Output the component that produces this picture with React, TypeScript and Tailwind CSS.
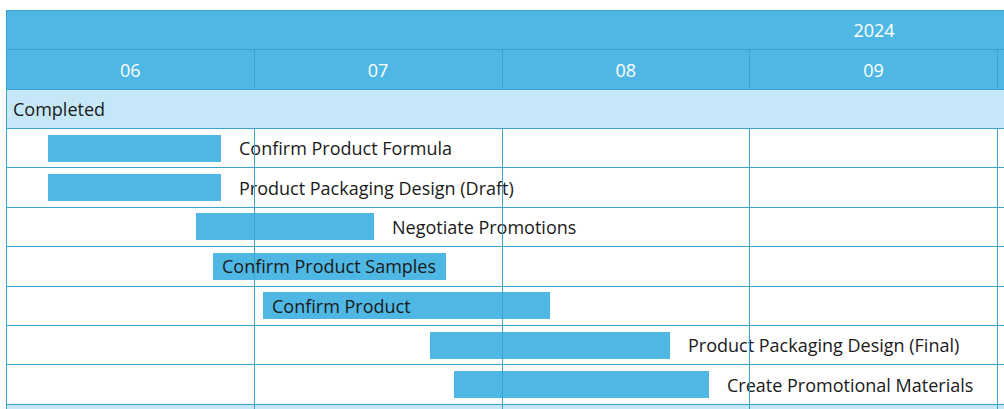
import React from 'react';

const months = ['06', '07', '08', '09', '10', '11', '12'];

// left/right are page x coordinates taken from the timeline
const tasks = [
  { id: 1, name: 'Confirm Product Formula', left: 48, right: 221, inside: false },
  { id: 2, name: 'Product Packaging Design (Draft)', left: 48, right: 221, inside: false },
  { id: 3, name: 'Negotiate Promotions', left: 196, right: 374, inside: false },
  { id: 4, name: 'Confirm Product Samples', left: 213, right: 446, inside: true },
  { id: 5, name: 'Confirm Product', left: 263, right: 550, inside: true },
  { id: 6, name: 'Product Packaging Design (Final)', left: 430, right: 670, inside: false },
  { id: 7, name: 'Create Promotional Materials', left: 454, right: 709, inside: false },
];

const GridLines = () => (
  <div className="pointer-events-none absolute inset-0 z-10 flex">
    {months.map((m) => (
      <div key={m} className="h-full w-[247.75px] shrink-0 border-r border-[#3ba2cd]" />
    ))}
  </div>
);

const App = () => {
  return (
    <div
      className="h-[409px] w-[1004px] overflow-hidden bg-white pt-[10px] pl-[6px] text-[18px] leading-[24px] text-[#1a1a1a]"
      style={{ fontFamily: '"Open Sans", "Noto Sans", sans-serif' }}
    >
      <div className="w-[1735px] border-l border-t border-[#3ba2cd]">
        {/* year */}
        <div className="flex h-[39px] items-center justify-center border-b border-[#3ba2cd] bg-[#4fb7e4] text-white">
          2024
        </div>
        {/* months */}
        <div className="flex h-[40px] border-b border-[#3ba2cd] bg-[#4fb7e4] text-white">
          {months.map((m) => (
            <div
              key={m}
              className="flex w-[247.75px] shrink-0 items-center justify-center border-r border-[#3ba2cd]"
            >
              {m}
            </div>
          ))}
        </div>
        {/* group */}
        <div className="flex h-[39px] items-center border-b border-[#3ba2cd] bg-[#c6e7f7] pl-[6px]">
          Completed
        </div>
        {/* tasks */}
        <div className="relative">
          <GridLines />
          {tasks.map((t) => (
            <div
              key={t.id}
              className="flex h-[39.4px] items-center border-b border-[#3ba2cd]"
            >
              <div
                className="flex h-[27px] shrink-0 items-center bg-[#4fb7e4] pl-[9px] whitespace-nowrap"
                style={{ marginLeft: t.left - 7, width: t.right - t.left }}
              >
                {t.inside ? t.name : ''}
              </div>
              {!t.inside && <span className="ml-[18px] whitespace-nowrap">{t.name}</span>}
            </div>
          ))}
          <div className="h-[39px] bg-[#c6e7f7]" />
        </div>
      </div>
    </div>
  );
};

export default App;
